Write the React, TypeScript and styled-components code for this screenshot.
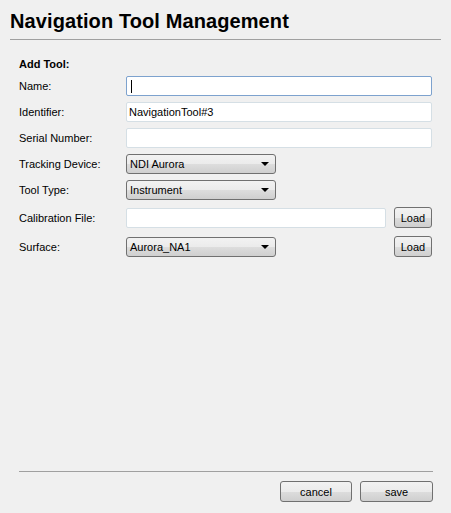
import styled, { createGlobalStyle } from "styled-components";

const Global = createGlobalStyle`
  html, body { margin: 0; padding: 0; background: #f0f0f0; }
  body { font-family: "Liberation Sans", Arial, sans-serif; font-size: 11px; color: #000; }
`;

const Page = styled.div`
  height: 513px;
  display: flex;
  flex-direction: column;
  box-sizing: border-box;
  padding: 0 10px 11px 10px;
`;

const Title = styled.h1`
  margin: 0;
  padding: 10px 0 6px 0;
  font-size: 20px;
  font-weight: bold;
  letter-spacing: 0.1px;
  border-bottom: 1px solid #a0a0a0;
  line-height: 23px;
`;

const Body = styled.div`
  flex: 1;
  padding: 17px 9px 0 9px;
  display: flex;
  flex-direction: column;
`;

const Section = styled.div`
  font-weight: bold;
  height: 14px;
  line-height: 14px;
  margin-bottom: 5px;
`;

const Row = styled.div<{ $mt?: number }>`
  display: grid;
  grid-template-columns: 107px 1fr auto;
  align-items: center;
  margin-top: ${({ $mt }) => $mt ?? 6}px;
`;

const Label = styled.div`
  height: 20px;
  line-height: 20px;
`;

const Field = styled.div<{ $span?: boolean }>`
  grid-column: ${({ $span }) => ($span ? "2 / 4" : "2 / 3")};
  display: flex;
`;

const Input = styled.div<{ $focus?: boolean }>`
  flex: 1;
  height: 20px;
  box-sizing: border-box;
  background: #fff;
  border: 1px solid ${({ $focus }) => ($focus ? "#7da2ce" : "#d5dfe5")};
  border-radius: 2px;
  padding: 0 2px;
  line-height: 18px;
  display: flex;
  align-items: center;
`;

const Caret = styled.span`
  margin-left: 2px;
  width: 1px;
  height: 13px;
  background: #000;
`;

const Combo = styled.div`
  width: 150px;
  height: 20px;
  box-sizing: border-box;
  border: 1px solid #707070;
  border-radius: 3px;
  background: linear-gradient(#f2f2f2 0%, #ebebeb 50%, #dddddd 51%, #cfcfcf 100%);
  display: flex;
  align-items: center;
  justify-content: space-between;
  padding: 0 6px 0 3px;
`;

const Arrow = styled.span`
  width: 0;
  height: 0;
  border-left: 4px solid transparent;
  border-right: 4px solid transparent;
  border-top: 4px solid #000;
`;

const Button = styled.button<{ $w?: number }>`
  width: ${({ $w }) => $w ?? 38}px;
  height: 21px;
  box-sizing: border-box;
  border: 1px solid #707070;
  border-radius: 3px;
  background: linear-gradient(#f2f2f2 0%, #ebebeb 50%, #dddddd 51%, #cfcfcf 100%);
  font-family: inherit;
  font-size: 11px;
  color: #000;
  padding: 0;
`;

const Side = styled.div`
  padding-left: 8px;
  display: flex;
  justify-content: flex-end;
`;

const Footer = styled.div`
  margin: 0 8px 0 9px;
  border-top: 1px solid #a0a0a0;
  padding-top: 9px;
  display: flex;
  justify-content: flex-end;
  gap: 8px;
`;

export default function App() {
  return (
    <Page>
      <Global />
      <Title>Navigation Tool Management</Title>
      <Body>
        <Section>Add Tool:</Section>
        <Row $mt={0}>
          <Label>Name:</Label>
          <Field $span>
            <Input $focus>
              <Caret />
            </Input>
          </Field>
        </Row>
        <Row>
          <Label>Identifier:</Label>
          <Field $span>
            <Input>NavigationTool#3</Input>
          </Field>
        </Row>
        <Row>
          <Label>Serial Number:</Label>
          <Field $span>
            <Input />
          </Field>
        </Row>
        <Row>
          <Label>Tracking Device:</Label>
          <Field $span>
            <Combo>
              NDI Aurora
              <Arrow />
            </Combo>
          </Field>
        </Row>
        <Row>
          <Label>Tool Type:</Label>
          <Field $span>
            <Combo>
              Instrument
              <Arrow />
            </Combo>
          </Field>
        </Row>
        <Row $mt={7}>
          <Label>Calibration File:</Label>
          <Field>
            <Input />
          </Field>
          <Side>
            <Button>Load</Button>
          </Side>
        </Row>
        <Row $mt={8}>
          <Label>Surface:</Label>
          <Field>
            <Combo>
              Aurora_NA1
              <Arrow />
            </Combo>
          </Field>
          <Side>
            <Button>Load</Button>
          </Side>
        </Row>
      </Body>
      <Footer>
        <Button $w={72}>cancel</Button>
        <Button $w={73}>save</Button>
      </Footer>
    </Page>
  );
}
